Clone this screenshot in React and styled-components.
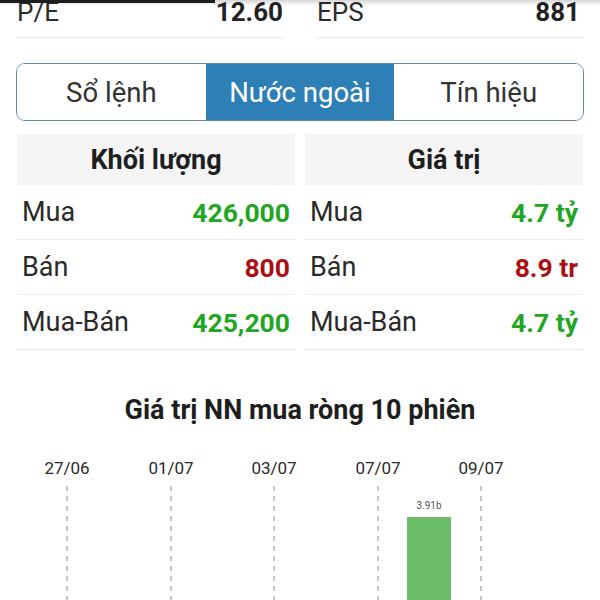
import React from "react";
import styled, { createGlobalStyle } from "styled-components";

const Global = createGlobalStyle`
  html, body { margin: 0; padding: 0; background: #fff; }
  body { font-family: Roboto, "Noto Sans", "Liberation Sans", sans-serif; color: #222; overflow: hidden; }
`;

const Page = styled.div`
  position: relative;
  width: 600px;
  height: 600px;
  overflow: hidden;
  background: #fff;
`;

const TopShade = styled.div`
  position: absolute;
  left: 0;
  right: 0;
  top: 0;
  height: 6px;
  background: linear-gradient(rgba(0,0,0,0.16), rgba(0,0,0,0));
  pointer-events: none;
`;

const ScrollBar = styled.div`
  position: absolute;
  left: 0;
  top: 0;
  width: 215px;
  height: 3px;
  background: #1d1d1d;
`;

const Content = styled.div`
  padding: 0 17px;
`;

const StatsGrid = styled.div`
  display: grid;
  grid-template-columns: 1fr 1fr;
  column-gap: 34px;
`;

const StatRow = styled.div`
  display: flex;
  justify-content: space-between;
  align-items: flex-start;
  height: 37px;
  border-bottom: 1px solid #ececec;
  font-size: 26px;
  line-height: 24px;
`;

const StatLabel = styled.span`
  color: #2a2a2a;
`;

const StatValue = styled.span`
  font-weight: 700;
  color: #222;
  padding-right: ${(p) => p.$pad || 0}px;
`;

const Tabs = styled.div`
  display: grid;
  grid-template-columns: repeat(3, 1fr);
  margin: 25px -1px 0;
  height: 56px;
  border: 1.5px solid #5c87a6;
  border-radius: 9px;
  overflow: hidden;
`;

const Tab = styled.div`
  display: flex;
  align-items: center;
  justify-content: center;
  font-size: 27.5px;
  background: ${(p) => (p.$active ? "#2f7fb7" : "#fff")};
  color: ${(p) => (p.$active ? "#fff" : "#333")};
`;

const Panels = styled.div`
  display: grid;
  grid-template-columns: 1fr 1fr;
  column-gap: 10px;
  margin-top: 13px;
`;

const Panel = styled.div`
  display: flex;
  flex-direction: column;
`;

const PanelHeader = styled.div`
  height: 51px;
  display: flex;
  align-items: center;
  justify-content: center;
  background: #f5f5f5;
  font-weight: 700;
  font-size: 27px;
  color: #1e1e1e;
`;

const Row = styled.div`
  height: 54px;
  display: flex;
  align-items: center;
  justify-content: space-between;
  padding: 0 5px;
  border-bottom: 1px solid #ededed;
  font-size: 27px;
`;

const RowLabel = styled.span`
  color: #2a2a2a;
`;

const RowValue = styled.span`
  font-weight: 700;
  font-size: 26.5px;
  color: ${(p) => (p.$down ? "#a90f12" : "#22a522")};
`;

const ChartTitle = styled.div`
  margin-top: 45px;
  text-align: center;
  font-weight: 700;
  font-size: 27px;
  line-height: 30px;
  color: #1e1e1e;
`;

const ChartSvg = styled.svg`
  display: block;
  margin-top: 16px;
`;

const stats = [
  { label: "P/E", value: "12.60" },
  { label: "EPS", value: "881", pad: 3 },
];

const panels = [
  {
    title: "Khối lượng",
    rows: [
      { label: "Mua", value: "426,000" },
      { label: "Bán", value: "800", down: true },
      { label: "Mua-Bán", value: "425,200" },
    ],
  },
  {
    title: "Giá trị",
    rows: [
      { label: "Mua", value: "4.7 tỷ" },
      { label: "Bán", value: "8.9 tr", down: true },
      { label: "Mua-Bán", value: "4.7 tỷ" },
    ],
  },
];

const dates = [
  { x: 67, t: "27/06" },
  { x: 171, t: "01/07" },
  { x: 274, t: "03/07" },
  { x: 378, t: "07/07" },
  { x: 481, t: "09/07" },
];

function Chart() {
  return (
    <ChartSvg width="600" height="170" viewBox="0 0 600 170">
      {dates.map((d) => (
        <g key={d.t}>
          <text
            x={d.x}
            y={33}
            textAnchor="middle"
            fontFamily="Roboto, sans-serif"
            fontSize="17"
            fill="#2a2a2a"
          >
            {d.t}
          </text>
          <line
            x1={d.x}
            x2={d.x}
            y1={45}
            y2={170}
            stroke="#a8a8a8"
            strokeWidth="1.3"
            strokeDasharray="5 5"
          />
        </g>
      ))}
      <rect x="407" y="76" width="44" height="100" fill="#6cbd68" />
      <text
        x="429"
        y="68"
        textAnchor="middle"
        fontFamily="Roboto, sans-serif"
        fontSize="10"
        fill="#555"
      >
        3.91b
      </text>
    </ChartSvg>
  );
}

export default function App() {
  return (
    <Page>
      <Global />
      <Content>
        <StatsGrid>
          {stats.map((s) => (
            <StatRow key={s.label}>
              <StatLabel>{s.label}</StatLabel>
              <StatValue $pad={s.pad}>{s.value}</StatValue>
            </StatRow>
          ))}
        </StatsGrid>
        <Tabs>
          <Tab>Sổ lệnh</Tab>
          <Tab $active>Nước ngoài</Tab>
          <Tab>Tín hiệu</Tab>
        </Tabs>
        <Panels>
          {panels.map((p) => (
            <Panel key={p.title}>
              <PanelHeader>{p.title}</PanelHeader>
              {p.rows.map((r) => (
                <Row key={r.label}>
                  <RowLabel>{r.label}</RowLabel>
                  <RowValue $down={r.down}>{r.value}</RowValue>
                </Row>
              ))}
            </Panel>
          ))}
        </Panels>
        <ChartTitle>Giá trị NN mua ròng 10 phiên</ChartTitle>
      </Content>
      <Chart />
      <TopShade />
      <ScrollBar />
    </Page>
  );
}
